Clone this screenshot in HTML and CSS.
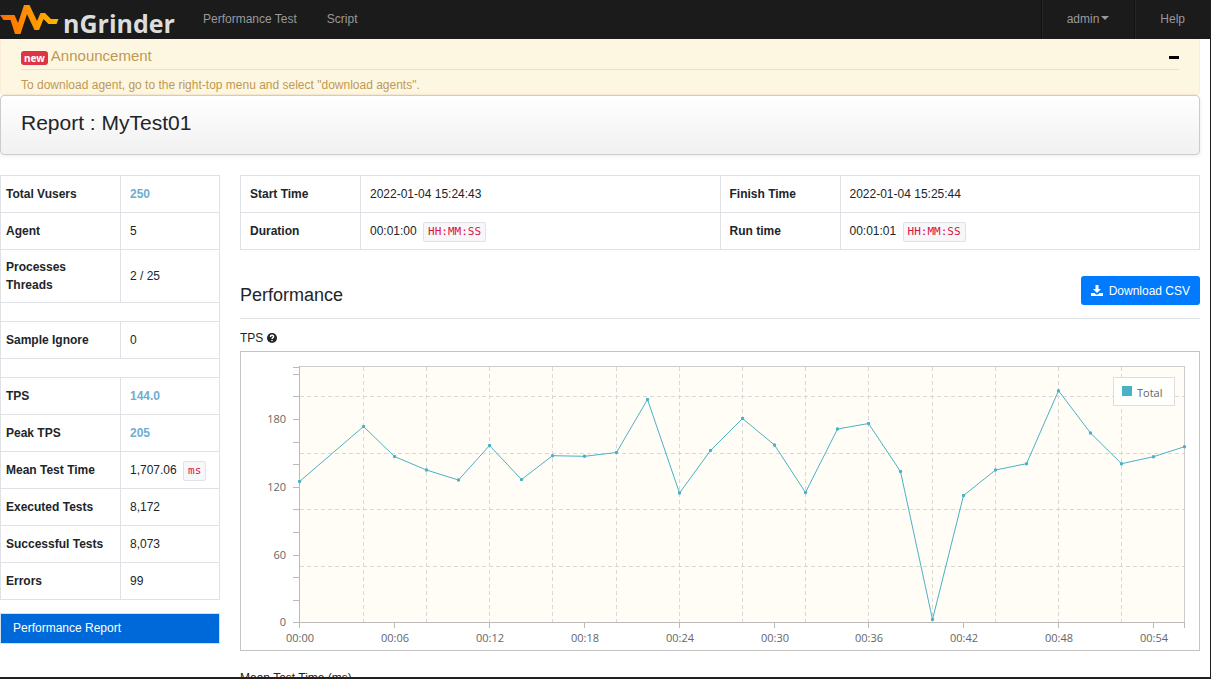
FILE: index.html
```html
<!DOCTYPE html>
<html lang="en">
<head>
<meta charset="utf-8">
<title>nGrinder Report</title>
<link rel="stylesheet" href="styles.css">
</head>
<body>
<div class="frame">
  <header class="navbar">
    <a class="brand" href="#" aria-label="nGrinder">
      <svg class="brand-mark" viewBox="0 0 60 39" aria-hidden="true">
        <defs><linearGradient id="flame" gradientUnits="userSpaceOnUse" x1="0" y1="0" x2="58" y2="0"><stop offset="0" stop-color="#ff6a00"/><stop offset="0.5" stop-color="#ff9200"/><stop offset="1" stop-color="#ffb400"/></linearGradient></defs>
        <path fill="url(#flame)" d="M0 15H14.500L18 23L24 5H29.500L37 21L40.500 13H45L51 19H58.500L56.500 24H48.500L43.500 19L39 30H34.500L27 14L20.500 34H15L10.500 20H3.500Z"/>
      </svg>
      <span class="brand-name">nGrinder</span>
    </a>
    <nav class="nav-links">
      <a href="#">Performance Test</a>
      <a href="#">Script</a>
    </nav>
    <nav class="nav-user">
      <a href="#">admin<span class="caret"></span></a>
      <a href="#">Help</a>
    </nav>
  </header>

  <main class="container">
    <section class="announcement">
      <div class="announcement-head">
        <span class="badge">new</span>
        <h2>Announcement</h2>
        <button class="collapse" type="button" aria-label="Collapse announcement"></button>
      </div>
      <p>To download agent, go to the right-top menu and select "download agents".</p>
    </section>

    <section class="title-card"><h1>Report : MyTest01</h1></section>

    <div class="report">
      <aside class="sidebar">
        <table class="grid summary">
          <tr><th scope="row">Total Vusers</th><td class="strong">250</td></tr>
          <tr><th scope="row">Agent</th><td>5</td></tr>
          <tr><th scope="row">Processes<br>Threads</th><td>2 / 25</td></tr>
          <tr class="spacer"><td colspan="2"></td></tr>
          <tr><th scope="row">Sample Ignore</th><td>0</td></tr>
          <tr class="spacer"><td colspan="2"></td></tr>
          <tr><th scope="row">TPS</th><td class="strong">144.0</td></tr>
          <tr><th scope="row">Peak TPS</th><td class="strong">205</td></tr>
          <tr><th scope="row">Mean Test Time</th><td>1,707.06 <code>ms</code></td></tr>
          <tr><th scope="row">Executed Tests</th><td>8,172</td></tr>
          <tr><th scope="row">Successful Tests</th><td>8,073</td></tr>
          <tr><th scope="row">Errors</th><td>99</td></tr>
        </table>
        <a class="report-link" href="#">Performance Report</a>
      </aside>

      <div class="detail">
        <table class="grid times">
          <tr><th scope="row">Start Time</th><td>2022-01-04 15:24:43</td><th scope="row">Finish Time</th><td>2022-01-04 15:25:44</td></tr>
          <tr><th scope="row">Duration</th><td>00:01:00 <code>HH:MM:SS</code></td><th scope="row">Run time</th><td>00:01:01 <code>HH:MM:SS</code></td></tr>
        </table>

        <div class="section-head">
          <h3>Performance</h3>
          <button class="download" type="button">
            <svg viewBox="0 0 12 12" aria-hidden="true"><path fill="currentColor" d="M4.500 0h3v4H10L6 8 2 4h2.500zM0 8h3.500l1.500 1.500h2L8.500 8H12v3H0z"/></svg>
            Download CSV
          </button>
        </div>

        <div class="chart-title">TPS
          <svg viewBox="0 0 10 10" aria-hidden="true"><circle cx="5" cy="5" r="5" fill="#212529"/><path d="M3.400 3.900C3.400 1.700 6.700 1.900 6.600 3.700C6.600 4.600 5 4.700 5 5.900" fill="none" stroke="#fff" stroke-width="1.400"/><path d="M4.300 6.900h1.400v1.300H4.300z" fill="#fff"/></svg>
        </div>
        <div class="chart">
          <svg viewBox="1 1 958 298" role="img" aria-label="TPS over time">
            <defs><marker id="dot" markerUnits="userSpaceOnUse" markerWidth="4" markerHeight="4" refX="2" refY="2"><circle cx="2" cy="2" r="1.700" fill="#4bb2c5"/></marker></defs>
            <rect class="plot" x="59.500" y="15.500" width="885" height="256"/>
            <path class="gridline" d="M123.500 16V271M186.500 16V271M249.500 16V271M312.500 16V271M376.500 16V271M439.500 16V271M502.500 16V271M565.500 16V271M628.500 16V271M692.500 16V271M755.500 16V271M818.500 16V271M881.500 16V271M60 45.500H944M60 102.500H944M60 158.500H944M60 215.500H944"/>
            <path class="axis" d="M59.500 15V277M53 271.500H945M53 16.500h6M53 23.500h6M53 45.500h6M53 68.500h6M53 91.500h6M53 113.500h6M53 136.500h6M53 158.500h6M53 181.500h6M53 204.500h6M53 226.500h6M53 249.500h6M154.500 272v5M249.500 272v5M344.500 272v5M439.500 272v5M534.500 272v5M628.500 272v5M723.500 272v5M818.500 272v5M913.500 272v5M944.500 272v5"/>
            <polyline class="series" points="59.5,130.5 123.5,75.5 154.5,105.5 186.5,119 218.5,129 249.5,94.500 281.5,128.5 312.5,104.7 344.5,105.3 376.5,101.5 407.5,48.5 439.5,142 470.5,99.500 502.5,67.500 534.5,94 565.5,141.5 597.5,78 628.5,72.500 660.5,120.5 692.5,268.5 723.5,144.5 755.5,119 786.5,112.7 818.5,39.700 850.5,82 881.5,112.7 913.5,105.7 944.5,95.700"/>
            <g class="y-labels"><text x="46" y="72">180</text><text x="46" y="140">120</text><text x="46" y="208">60</text><text x="46" y="275">0</text></g>
            <g class="x-labels"><text x="60" y="291">00:00</text><text x="155" y="291">00:06</text><text x="250" y="291">00:12</text><text x="345" y="291">00:18</text><text x="440" y="291">00:24</text><text x="535" y="291">00:30</text><text x="629" y="291">00:36</text><text x="724" y="291">00:42</text><text x="819" y="291">00:48</text><text x="914" y="291">00:54</text></g>
            <rect class="legend" x="873.500" y="26.500" width="61" height="28"/>
            <rect x="882" y="35" width="10" height="10" fill="#4bb2c5"/>
            <text x="897" y="46">Total</text>
          </svg>
        </div>
        <div class="chart-title">Mean Test Time (ms)</div>
      </div>
    </div>
  </main>
</div>
</body>
</html>
```

FILE: styles.css
```css
* { box-sizing: border-box; }
body { margin: 0; font: 12px/18px "Liberation Sans", Arial, sans-serif; color: #212529; background: #fff; }
h1, h2, h3, p { margin: 0; font-weight: 400; }
a { text-decoration: none; }
.frame { height: 100vh; overflow: hidden; border-right: 1px solid #231f20; border-bottom: 2px solid #231f20; }

.navbar { display: flex; height: 39px; background: #1b1b1b; }
.navbar a { color: #999; }
.brand { display: flex; }
.brand-mark { width: 60px; height: 39px; }
.brand .brand-name { padding-left: 3px; width: 128px; font: 700 25px/46px "Open Sans", sans-serif; color: #ddd; }
.nav-links { display: flex; flex: 1; line-height: 38px; }
.nav-links a { padding: 0 15px; }
.nav-user { display: flex; line-height: 38px; }
.nav-user a { padding: 0 25px; border-left: 1px solid #111; box-shadow: inset 1px 0 #262626; }
.caret { display: inline-block; margin-left: 2px; border: 4px solid transparent; border-top-color: #999; border-bottom: 0; vertical-align: 3px; }

.container { padding-right: 10px; }
.announcement { height: 56px; padding: 7px 20px 0; border: 1px solid #fbeed5; border-top: 0; border-radius: 0 0 4px 4px; background: #fdf7e2; color: #c09853; }
.announcement-head { display: flex; align-items: center; gap: 3px; height: 24px; padding-bottom: 4px; border-bottom: 1px solid #dee2e6; }
.announcement h2 { flex: 1; font-size: 15px; line-height: 20px; }
.announcement p { padding-top: 6px; }
.badge { height: 14px; margin-top: 4px; padding: 0 3px; border-radius: 3px; background: #dc3545; color: #fff; font: 700 10px/14px "Noto Sans", sans-serif; }
.collapse { width: 10px; height: 3px; margin-top: 4px; padding: 0; border: 0; background: #000; }
.title-card { padding: 12px 20px 16px; border: 1px solid #ccc; border-radius: 4px; background: linear-gradient(#fff, #f1f1f1); box-shadow: 0 1px 4px rgba(0, 0, 0, .08); }
.title-card h1 { font-size: 21px; line-height: 30px; }

.report { display: flex; align-items: flex-start; gap: 20px; padding-top: 20px; }
.sidebar { width: 220px; }
.detail { flex: 1; }
.grid { width: 100%; border-collapse: collapse; table-layout: fixed; }
.grid th, .grid td { height: 37px; padding: 8px 9px; border: 1px solid #dee2e6; text-align: left; vertical-align: middle; }
.grid th { width: 120px; font-weight: 700; }
.summary th, .summary td { padding-right: 0; }
.summary th { padding-left: 5px; }
.grid .spacer td { height: 19px; padding: 0; }
.strong { color: #6faed0; font-weight: 700; }
code { display: inline-block; margin-left: 3px; padding: 0 4px; border: 1px solid #e1e1e8; border-radius: 2px; background: #f7f7f9; color: #dd1144; font: 11px/18px "DejaVu Sans Mono", monospace; }
.grid td:has(code) { padding-top: 2px; padding-bottom: 0; }
.report-link { display: block; margin-top: 13px; padding: 5px 12px 6px; border: 1px solid #cfe0f2; background: #0069d9; color: #fff; }

.section-head { display: flex; align-items: flex-start; justify-content: space-between; margin-top: 26px; height: 43px; border-bottom: 1px solid #dee2e6; }
.section-head h3 { padding-top: 6px; font-size: 18px; line-height: 26px; }
.download { display: flex; align-items: center; gap: 6px; height: 29px; padding: 0 10px; border: 0; border-radius: 3px; background: #007bff; color: #fff; font: 12px/18px "Liberation Sans", Arial, sans-serif; }
.download svg { width: 12px; height: 12px; }
.chart-title { display: flex; align-items: center; gap: 4px; height: 18px; margin-top: 10px; }
.chart-title svg { width: 10px; height: 10px; }
.chart { margin: 4px 0 18px; border: 1px solid #c4c4c4; }
.chart svg { display: block; width: 100%; font: 11px "Open Sans", sans-serif; fill: #666; }
.chart .plot { fill: #fffdf6; stroke: #ccc; }
.gridline { fill: none; stroke: #d8d8d8; stroke-dasharray: 4 3; }
.axis { fill: none; stroke: #bbb; }
.series { fill: none; stroke: #4bb2c5; marker: url(#dot); }
.legend { fill: #fff; fill-opacity: .9; stroke: #ddd; }
.y-labels { text-anchor: end; }
.x-labels { text-anchor: middle; }
```
